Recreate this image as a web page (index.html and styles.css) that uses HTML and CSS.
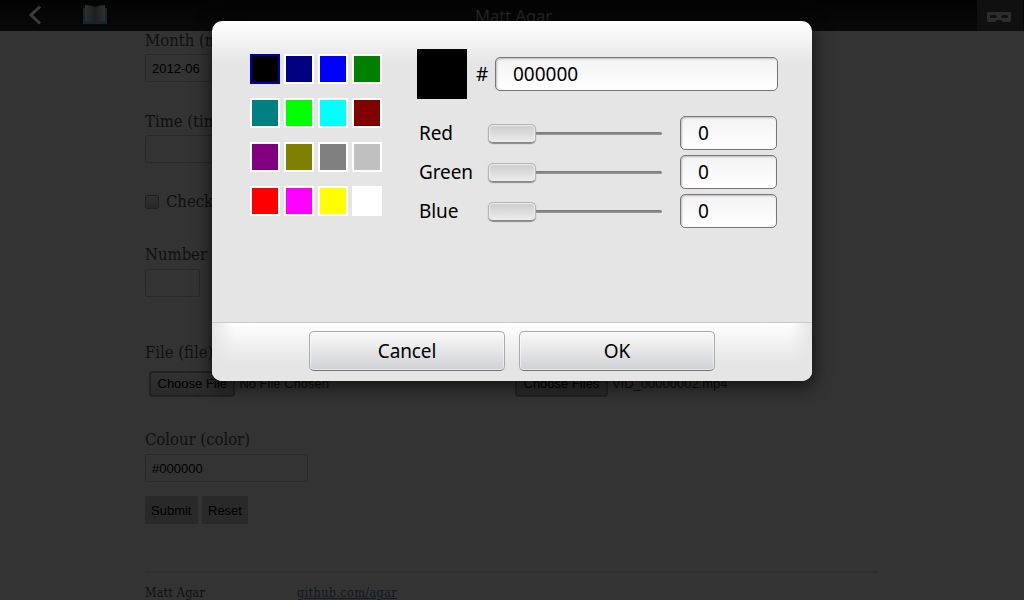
FILE: index.html
```html
<!DOCTYPE html>
<html lang="en">
<head>
<meta charset="utf-8">
<title>Matt Agar</title>
<link rel="stylesheet" href="styles.css">
</head>
<body>
<header class="bar">
  <svg class="back" width="14" height="20" viewBox="0 0 14 20"><path d="M12 1.500 3 10l9 8.500" fill="none" stroke="#3b3b3b" stroke-width="3"/></svg>
  <svg class="book" width="24" height="20" viewBox="0 0 24 20"><defs><linearGradient id="pages"><stop offset="0" stop-color="#2b3133"/><stop offset=".5" stop-color="#1b1f20"/><stop offset="1" stop-color="#2b3133"/></linearGradient></defs><path d="M0 4h24v16H0z" fill="#16262b"/><path d="M2 1q6 0 10 2 4-2 10-2v16q-7 0-10 2-3-2-10-2z" fill="url(#pages)"/></svg>
  <span class="bar-title">Matt Agar</span>
  <div class="reader"><svg width="26" height="12" viewBox="0 0 26 12"><path fill-rule="evenodd" d="M2 1h22l1 1v7l-1 2h-7l-2-2h-4l-2 2H2L1 9V2zM5 4 4 5v1l1 1h4l2-1V5L9 4zm12 0-2 1v1l2 1h4l1-1V5l-1-1z" fill="#2d2d2d"/></svg></div>
</header>
<main class="page">
  <section class="field month"><label>Month (month)</label><div class="input">2012-06</div></section>
  <section class="field time"><label>Time (time)</label><div class="input"></div></section>
  <section class="check"><span class="box"></span><label>Checkbox</label></section>
  <section class="field number"><label>Number</label><div class="input short"></div></section>
  <section class="field file"><label>File (file)</label>
    <div class="files">
      <div class="picker"><span class="choose">Choose File</span><span>No File Chosen</span></div>
      <div class="picker"><span class="choose">Choose Files</span><span>VID_00000002.mp4</span></div>
    </div>
  </section>
  <section class="field colour"><label>Colour (color)</label><div class="input">#000000</div></section>
  <div class="actions"><span class="action submit">Submit</span><span class="action reset">Reset</span></div>
  <footer class="footer"><span class="author">Matt Agar</span><span class="link">github.com/agar</span></footer>
</main>
<div class="dialog">
  <div class="content">
    <div class="swatches">
      <i class="sw black"></i><i class="sw navy"></i><i class="sw blue"></i><i class="sw green"></i>
      <i class="sw teal"></i><i class="sw lime"></i><i class="sw cyan"></i><i class="sw maroon"></i>
      <i class="sw purple"></i><i class="sw olive"></i><i class="sw gray"></i><i class="sw silver"></i>
      <i class="sw red"></i><i class="sw magenta"></i><i class="sw yellow"></i><i class="sw white"></i>
    </div>
    <div class="controls">
      <div class="hex"><div class="preview"></div><span class="hash">#</span><div class="text hexvalue">000000</div></div>
      <div class="channel"><span class="name">Red</span><div class="slider"><i class="thumb"></i><i class="track"></i></div><div class="text value">0</div></div>
      <div class="channel"><span class="name">Green</span><div class="slider"><i class="thumb"></i><i class="track"></i></div><div class="text value">0</div></div>
      <div class="channel"><span class="name">Blue</span><div class="slider"><i class="thumb"></i><i class="track"></i></div><div class="text value">0</div></div>
    </div>
  </div>
  <div class="buttons"><div class="button">Cancel</div><div class="button">OK</div></div>
</div>
</body>
</html>
```
FILE: styles.css
```css
* { box-sizing: border-box; }
body { margin: 0; width: 1024px; height: 600px; overflow: hidden; position: relative; background: #333; font-family: "Liberation Sans", Arial, sans-serif; }
.bar { height: 31px; display: grid; grid-template-columns: 83px 24px 1fr 47px; background: linear-gradient(#030303, #090909); }
.back { margin: 5px 0 0 28px; }
.book { margin-top: 4px; }
.bar-title { padding: 4px 0 0 368px; font: 16.500px/23px "Noto Sans", sans-serif; color: #262626; }
.reader { background: #101010; border-right: 1px solid #080808; display: flex; align-items: center; justify-content: center; padding: 3px 2px 0 0; }
.page { width: 733px; margin-left: 145px; color: #101010; }
.field { display: flex; flex-direction: column; gap: 3px; }
label { font: 16.500px/20px "DejaVu Serif Condensed", "DejaVu Serif", serif; font-stretch: condensed; white-space: nowrap; }
.input { width: 163px; height: 28px; border: 1px solid #292929; border-radius: 2px; padding-left: 6px; font-size: 13px; line-height: 27px; color: #000; }
.short { width: 55px; }
.time { margin-top: 30px; }
.check { margin-top: 29px; height: 20px; display: flex; gap: 7px; align-items: center; }
.box { width: 14px; height: 14px; border: 1px solid #1f1f1f; border-radius: 2px; background: linear-gradient(#303030, #282828); }
.number { margin-top: 33px; gap: 4px; }
.file { margin-top: 46px; gap: 8px; }
.files { display: grid; grid-template-columns: 366px 1fr; padding-left: 4px; height: 26px; }
.picker { display: flex; gap: 4px; font-size: 13px; line-height: 26px; color: #0b0b0b; }
.choose { border: 2px solid #222; border-radius: 4px; background: linear-gradient(#323232, #292929); padding: 0 6.500px; line-height: 22px; color: #000; }
.colour { margin-top: 33px; gap: 4px; }
.actions { display: flex; gap: 4px; margin-top: 14px; }
.action { height: 28px; padding: 0 6px; background: #292929; border-radius: 2px; font-size: 13px; line-height: 29px; color: #000; }
.submit { width: 53px; }
.footer { margin-top: 47px; border-top: 2px solid #2e2e2e; padding-top: 11px; display: grid; grid-template-columns: 152px 1fr; font: 12.500px/18px "DejaVu Serif Condensed", "DejaVu Serif", serif; font-stretch: condensed; letter-spacing: .2px; }
.link { color: #0b1923; text-decoration: underline; letter-spacing: .4px; }
.dialog { position: absolute; left: 212px; top: 21px; width: 600px; height: 360px; display: flex; flex-direction: column; border-radius: 10px; overflow: hidden; background: linear-gradient(#fff, #e5e5e5 43px); box-shadow: 0 4px 16px 3px rgba(0,0,0,.55); font: 19px/24px "Noto Sans", sans-serif; color: #000; }
.content { height: 301px; padding: 28px 34px 0 38px; display: flex; gap: 35px; }
.swatches { display: grid; grid-template-columns: repeat(4, 30px); grid-auto-rows: 30px; column-gap: 4px; row-gap: 14px; padding-top: 5px; align-content: start; }
.sw { border: 2px solid #fff; }
.black { background: #000; border-color: #0000b8; }
.navy { background: #000080; }
.blue { background: #00f; }
.green { background: #008000; }
.teal { background: #008080; }
.lime { background: #0f0; }
.cyan { background: #0ff; }
.maroon { background: #800000; }
.purple { background: #800080; }
.olive { background: #808000; }
.gray { background: #808080; }
.silver { background: #c0c0c0; }
.red { background: #f00; }
.magenta { background: #f0f; }
.yellow { background: #ff0; }
.white { background: #fff; }
.controls { width: 361px; }
.hex { display: flex; align-items: center; height: 50px; margin-bottom: 17px; }
.preview { width: 50px; height: 50px; background: #000; }
.hash { width: 28px; padding-left: 9px; }
.text { height: 34px; border: 1px solid #777; border-radius: 5px; background: linear-gradient(#f3f3f3, #fff); padding-left: 17px; line-height: 32px; box-shadow: inset 1px 1px 2px #bbb; }
.hexvalue { width: 283px; }
.channel { height: 34px; margin-bottom: 5px; display: grid; grid-template-columns: 69px 176px 97px; padding-left: 2px; align-items: center; }
.name { letter-spacing: -.1px; }
.channel .value { margin-left: 16px; width: 97px; }
.slider { display: flex; align-items: center; }
.thumb { width: 48px; height: 19px; border: 1px solid #b4b4b4; border-bottom-color: #888; border-radius: 5px; background: linear-gradient(#ccc, #ececec); box-shadow: inset 0 0 1px 1px #eee, 0 1px 1px #888; }
.track { width: 126px; height: 3px; background: linear-gradient(#777, #999); border-radius: 0 2px 2px 0; }
.buttons { flex: 1; border-top: 1px solid #c9c9c9; padding-top: 8px; display: flex; justify-content: center; gap: 14px; background: linear-gradient(90deg, #e5e5e5, rgba(229,229,229,0) 22px, rgba(229,229,229,0) 578px, #e5e5e5), linear-gradient(#fff, #e5e5e5 40px); }
.button { width: 196px; height: 40px; border: 1px solid #aaa; border-bottom-color: #71747a; border-radius: 5px; background: linear-gradient(#fafafa, #d0d1d4); text-align: center; line-height: 39px; letter-spacing: -.1px; box-shadow: inset 0 0 0 1px rgba(255,255,255,.5); }
```
